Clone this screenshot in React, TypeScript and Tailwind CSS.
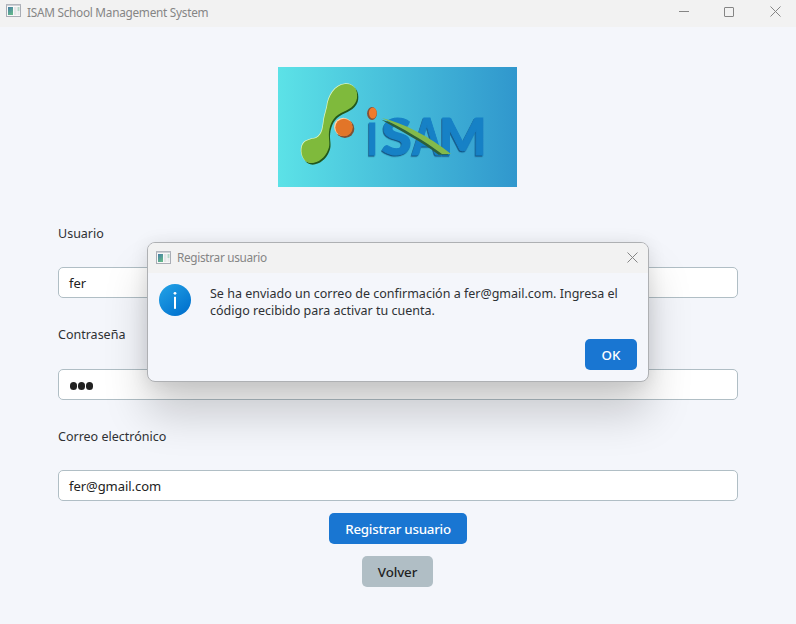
import React from 'react';

function AppIcon() {
  return (
    <svg width="16" height="14" viewBox="0 0 16 14" className="block shrink-0">
      <defs>
        <linearGradient id="pane" x1="0" y1="0" x2="0.5" y2="1">
          <stop offset="0" stopColor="#457da5" />
          <stop offset="1" stopColor="#62b58c" />
        </linearGradient>
      </defs>
      <rect x="0.5" y="0.5" width="14" height="12" fill="#f8f8f8" stroke="#a9adb5" />
      <rect x="0" y="0" width="15" height="1.6" fill="#b3b7be" />
      <rect x="2" y="3" width="5" height="8" fill="url(#pane)" />
      <rect x="8" y="3" width="2.5" height="8" fill="#e4e6e8" />
      <rect x="11.5" y="3" width="2" height="4" fill="#b4d6c8" />
      <rect x="11.5" y="7" width="2" height="4" fill="#e8e9ec" />
    </svg>
  );
}

function CloseIcon() {
  return (
    <svg width="11" height="11" viewBox="0 0 11 11" className="block" fill="none" stroke="#858585" strokeWidth="1">
      <path d="M.5 .5l10 10M10.5 .5l-10 10" />
    </svg>
  );
}

function Logo() {
  const leaf =
    'M49 40C50 29 57 18 67 17C76 16 80 23 79 31C78 39 70 43 63 46C55 50 52 57 51 65C50 71 53 77 50 83C47 91 39 97 32 96C25 95 22 86 24 79C26 73 33 72 38 71C45 68 45 58 46 52C47 47 48 44 49 40Z';
  return (
    <svg width="239" height="120" viewBox="0 0 239 120" className="-ml-0.5 block">
      <defs>
        <linearGradient id="bg" x1="0" y1="0" x2="1" y2="0">
          <stop offset="0" stopColor="#5ce2e7" />
          <stop offset="1" stopColor="#3097cd" />
        </linearGradient>
        <filter id="soft" x="-10%" y="-10%" width="120%" height="120%">
          <feGaussianBlur stdDeviation="0.7" />
        </filter>
        <filter id="bevel" x="-10%" y="-10%" width="120%" height="130%">
          <feDropShadow dx="-0.8" dy="1.2" stdDeviation="0.6" floodColor="#0a4978" floodOpacity="0.9" />
        </filter>
      </defs>
      <rect width="239" height="120" fill="url(#bg)" />
      <path d={leaf} transform="translate(1.2 1.6)" fill="#24591e" filter="url(#soft)" />
      <path d={leaf} transform="translate(-.6 -.6)" fill="#e3f7c4" filter="url(#soft)" />
      <path d={leaf} fill="#7fba3c" />
      <circle cx="66.9" cy="61.7" r="9.4" fill="#7b5134" filter="url(#soft)" />
      <circle cx="65.2" cy="59.8" r="9.1" fill="#ffd5a7" filter="url(#soft)" />
      <circle cx="66" cy="60.5" r="8.7" fill="#e27528" />
      <g
        filter="url(#bevel)"
        fill="#1681c6"
        stroke="#1681c6"
        strokeWidth="1"
        fontFamily="Lato, 'Liberation Sans', sans-serif"
        fontWeight="900"
        fontSize="50"
      >
        <text transform="translate(88.5 88) scale(.74 .88)">I</text>
        <text transform="translate(103.5 88) scale(1.1 1.02)">S</text>
        <text transform="translate(134.5 88) scale(.82 1.03)">A</text>
        <text transform="translate(161 88) scale(1 1.03)">M</text>
      </g>
      <ellipse cx="94" cy="46.5" rx="4.9" ry="6.5" fill="#845137" filter="url(#soft)" />
      <ellipse cx="94.8" cy="46" rx="3.9" ry="5.5" fill="#ef7b2d" />
      <path d="M104 52C124 57 149 69 171 87L161 87C146 75 123 63 104 52Z" fill="#2b5f3e" transform="translate(-.5 .8)" filter="url(#soft)" />
      <path d="M104 51C125 56 151 69 173 87L164 87C147 74 124 61 104 51Z" fill="#83ba4c" />
    </svg>
  );
}

function Field({ children, className }: { children: React.ReactNode; className: string }) {
  return (
    <div className={`h-[31px] w-full shrink-0 rounded-[5px] border border-[#b0bec5] bg-white pl-[10px] text-[13px] leading-[31px] tracking-[-0.05px] text-[#222] ${className}`}>
      {children}
    </div>
  );
}

export default function App() {
  return (
    <div className="relative flex h-[624px] w-[796px] flex-col overflow-hidden bg-[#f4f6fb] font-['Noto_Sans','Open_Sans',sans-serif] text-[#2e3134]">
      <header className="flex h-[27px] shrink-0 items-start bg-[#f2f2f2] pl-[6px] text-[#858585]">
        <div className="pt-1"><AppIcon /></div>
        <span className="ml-[5px] whitespace-nowrap text-[11.8px] leading-6 tracking-[-0.27px]">ISAM School Management System</span>
        <div className="ml-auto flex items-center pt-1.5 pr-[15px]">
          <div className="mr-[35px] h-px w-[10px] bg-[#858585]" />
          <div className="mr-[36px] h-[10px] w-[10px] rounded-[1px] border border-[#858585]" />
          <CloseIcon />
        </div>
      </header>
      <main className="flex flex-col items-center px-[58px] pt-10 text-[12.5px]">
        <Logo />
        <label className="mt-[37px] h-5 self-start leading-5">Usuario</label>
        <Field className="mt-[23px]">fer</Field>
        <label className="mt-[27px] h-5 self-start leading-5">Contraseña</label>
        <Field className="mt-6">
          <span className="flex h-full items-center gap-[1px] pt-[3px] pl-px">
            <i className="h-2 w-[7px] rounded-full bg-[#222]" />
            <i className="h-2 w-[7px] rounded-full bg-[#222]" />
            <i className="h-2 w-[7px] rounded-full bg-[#222]" />
          </span>
        </Field>
        <label className="mt-[27px] h-5 self-start leading-5">Correo electrónico</label>
        <Field className="mt-[23px]">fer@gmail.com</Field>
        <button className="mt-3 h-[31px] w-[138px] rounded-[5px] bg-[#1976d2] pt-px text-[13.33px] font-medium leading-[30px] tracking-[-0.25px] whitespace-nowrap text-white">Registrar usuario</button>
        <button className="mt-3 -ml-px h-[31px] w-[71px] rounded-[5px] bg-[#b0bec5] pt-px text-[13.33px] font-medium leading-[30px] tracking-[-0.1px] text-[#222]">Volver</button>
      </main>
      <section className="absolute top-[242px] left-[147px] flex h-[140px] w-[502px] flex-col overflow-hidden rounded-[8px] border border-[#aeb0b3] bg-[#f4f6fb] shadow-[0_32px_44px_0_rgba(0,0,0,0.18),0_2px_18px_0_rgba(0,0,0,0.1)]">
        <div className="flex h-[30px] shrink-0 items-center bg-[#f2f2f2] pr-[10px] pl-2 text-[#858585]">
          <AppIcon />
          <span className="ml-[5px] text-[11.8px] tracking-[-0.32px]">Registrar usuario</span>
          <div className="ml-auto pb-0.5"><CloseIcon /></div>
        </div>
        <div className="flex pt-[11px] pl-[11px]">
          <svg width="32" height="32" viewBox="0 0 32 32" className="block shrink-0">
            <defs>
              <linearGradient id="info" x1="0" y1="0" x2="0.8" y2="1">
                <stop offset="0" stopColor="#24a4e7" />
                <stop offset="1" stopColor="#0070cd" />
              </linearGradient>
            </defs>
            <circle cx="16" cy="16" r="16" fill="url(#info)" />
            <circle cx="16" cy="9.3" r="1.4" fill="#fff" />
            <rect x="15" y="12.8" width="2" height="12" fill="#fff" />
          </svg>
          <p className="ml-[19px] pt-px whitespace-nowrap text-[12.5px] leading-[17px]">
            Se ha enviado un correo de confirmación a fer@gmail.com. Ingresa el<br />
            código recibido para activar tu cuenta.
          </p>
        </div>
        <button className="mt-auto mr-[11px] mb-[11px] h-[31px] w-[52px] shrink-0 self-end rounded-[5px] bg-[#1976d2] pt-px text-[13.33px] font-medium leading-[30px] text-white">OK</button>
      </section>
    </div>
  );
}
